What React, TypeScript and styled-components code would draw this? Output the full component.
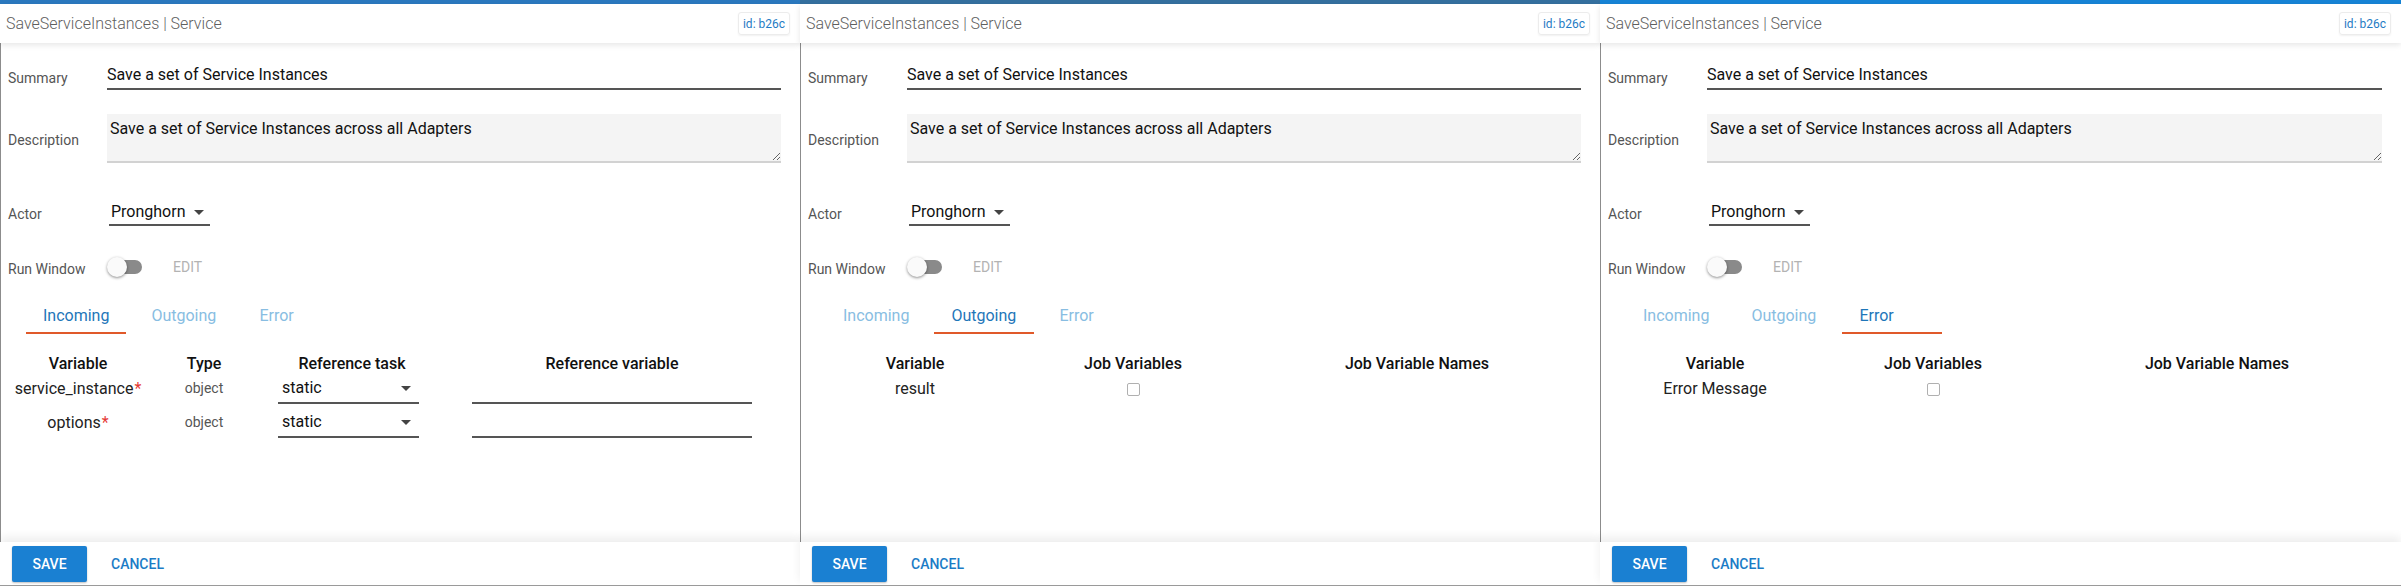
import React from "react";
import styled, { createGlobalStyle } from "styled-components";

type TabName = "Incoming" | "Outgoing" | "Error";

const GlobalStyle = createGlobalStyle`
  html, body {
    margin: 0;
    padding: 0;
    background: #ffffff;
    font-family: Roboto, "Open Sans", Arial, sans-serif;
    color: #222;
  }
  * {
    box-sizing: border-box;
  }
`;

function IncomingTable() {
  return (
    <Table $columns="140px 112px 184px 336px">
      <HeadCell>Variable</HeadCell>
      <HeadCell>Type</HeadCell>
      <HeadCell>Reference task</HeadCell>
      <HeadCell>Reference variable</HeadCell>

      <Cell>
        service_instance<Required>*</Required>
      </Cell>
      <TypeCell>object</TypeCell>
      <Cell>
        <SelectBox $width={141}>
          static
          <Arrow />
        </SelectBox>
      </Cell>
      <Cell>
        <LineInput />
      </Cell>

      <Cell>
        options<Required>*</Required>
      </Cell>
      <TypeCell>object</TypeCell>
      <Cell>
        <SelectBox $width={141}>
          static
          <Arrow />
        </SelectBox>
      </Cell>
      <Cell>
        <LineInput />
      </Cell>
    </Table>
  );
}

function JobTable({ variable }: { variable: string }) {
  return (
    <Table $columns="214px 222px 346px">
      <HeadCell>Variable</HeadCell>
      <HeadCell>Job Variables</HeadCell>
      <HeadCell>Job Variable Names</HeadCell>

      <Cell>{variable}</Cell>
      <Cell>
        <CheckBox />
      </Cell>
      <Cell />
    </Table>
  );
}

function TaskPanel({
  tab,
  width,
  barColor,
}: {
  tab: TabName;
  width: number;
  barColor: string;
}) {
  const tabs: TabName[] = ["Incoming", "Outgoing", "Error"];

  return (
    <Panel $width={width}>
      <TopBar $color={barColor} />
      <Header>
        <Title>SaveServiceInstances | Service</Title>
        <IdBadge>id: b26c</IdBadge>
      </Header>
      <Body>
        <FieldRow $top={19}>
          <FieldLabel>Summary</FieldLabel>
          <TextInput defaultValue="Save a set of Service Instances" />
        </FieldRow>
        <FieldRow $top={24}>
          <FieldLabel>Description</FieldLabel>
          <TextArea defaultValue="Save a set of Service Instances across all Adapters" />
        </FieldRow>
        <FieldRow $top={35}>
          <FieldLabel>Actor</FieldLabel>
          <ActorSelect>
            Pronghorn
            <Arrow />
          </ActorSelect>
        </FieldRow>
        <FieldRow $top={27}>
          <FieldLabel>Run Window</FieldLabel>
          <Toggle>
            <Track />
            <Thumb />
          </Toggle>
          <EditLink>EDIT</EditLink>
        </FieldRow>

        <TabBar>
          {tabs.map((t) => (
            <Tab key={t} $active={t === tab}>
              {t}
            </Tab>
          ))}
        </TabBar>

        {tab === "Incoming" && <IncomingTable />}
        {tab === "Outgoing" && <JobTable variable="result" />}
        {tab === "Error" && <JobTable variable="Error Message" />}
      </Body>
      <Footer>
        <SaveButton>SAVE</SaveButton>
        <CancelButton>CANCEL</CancelButton>
      </Footer>
    </Panel>
  );
}

export default function App() {
  return (
    <>
      <GlobalStyle />
      <Page>
        <TaskPanel tab="Incoming" width={800} barColor="#2b79bf" />
        <TaskPanel tab="Outgoing" width={800} barColor="#35709f" />
        <TaskPanel tab="Error" width={801} barColor="#1784d6" />
      </Page>
    </>
  );
}

const Page = styled.div`
  display: flex;
  flex-direction: row;
  width: 2401px;
  height: 586px;
  overflow: hidden;
`;

const Panel = styled.div<{ $width: number }>`
  width: ${(p) => p.$width}px;
  flex: none;
  height: 586px;
  display: flex;
  flex-direction: column;
  background: #fff;
`;

const TopBar = styled.div<{ $color: string }>`
  height: 4px;
  background: ${(p) => p.$color};
`;

const Header = styled.div`
  height: 39px;
  display: flex;
  align-items: center;
  justify-content: space-between;
  padding: 0 10px 0 6px;
  background: #fff;
  box-shadow: 0 2px 6px rgba(0, 0, 0, 0.1);
  position: relative;
  z-index: 2;
`;

const Title = styled.div`
  font-size: 16px;
  font-weight: 300;
  color: #5f5f5f;
`;

const IdBadge = styled.div`
  height: 23px;
  width: 52px;
  display: flex;
  align-items: center;
  justify-content: center;
  font-size: 12px;
  color: #1f7cc4;
  border: 1px solid #ececec;
  border-radius: 3px;
  box-shadow: 0 1px 2px rgba(0, 0, 0, 0.06);
`;

const Body = styled.div`
  flex: 1;
  display: flex;
  flex-direction: column;
  border-left: 1px solid #8c8c8c;
  padding: 0 19px 0 7px;
`;

const FieldRow = styled.div<{ $top: number }>`
  display: flex;
  align-items: center;
  margin-top: ${(p) => p.$top}px;
  min-height: 28px;
`;

const FieldLabel = styled.div`
  width: 99px;
  flex: none;
  font-size: 14px;
  color: #555;
  padding-top: 3px;
`;

const TextInput = styled.input`
  flex: 1;
  height: 28px;
  border: none;
  border-bottom: 2px solid #555;
  padding: 0 0 2px 0;
  font-family: Roboto, Arial, sans-serif;
  font-size: 16px;
  color: #111;
  outline: none;
  background: transparent;
`;

const TextArea = styled.textarea`
  flex: 1;
  height: 49px;
  border: none;
  border-bottom: 2px solid #d2d2d2;
  background: #f4f4f4;
  padding: 5px 3px 0 3px;
  font-family: Roboto, Arial, sans-serif;
  font-size: 16px;
  line-height: 19px;
  color: #111;
  outline: none;
  resize: vertical;
`;

const SelectBox = styled.div<{ $width: number }>`
  width: ${(p) => p.$width}px;
  height: 32px;
  margin: 0 auto 0 18px;
  display: flex;
  align-items: center;
  justify-content: space-between;
  padding: 0 8px 0 4px;
  border-bottom: 2px solid #555;
  font-size: 16px;
  color: #111;
`;

const ActorSelect = styled.div`
  width: 101px;
  height: 28px;
  margin-left: 2px;
  display: flex;
  align-items: center;
  gap: 8px;
  padding: 0 0 0 2px;
  border-bottom: 2px solid #555;
  font-size: 16px;
  color: #111;
`;

const Arrow = styled.span`
  width: 0;
  height: 0;
  border-left: 5px solid transparent;
  border-right: 5px solid transparent;
  border-top: 5px solid #444;
  margin-top: 2px;
`;

const Toggle = styled.div`
  position: relative;
  width: 35px;
  height: 20px;
  display: flex;
  align-items: center;
`;

const Track = styled.div`
  width: 34px;
  height: 14px;
  margin-left: 1px;
  border-radius: 7px;
  background: #8a8a8a;
`;

const Thumb = styled.div`
  position: absolute;
  left: 0;
  top: 0;
  width: 20px;
  height: 20px;
  border-radius: 50%;
  background: #fafafa;
  box-shadow: 0 1px 3px rgba(0, 0, 0, 0.45);
`;

const EditLink = styled.div`
  margin-left: 31px;
  font-size: 14px;
  color: #b3b3b3;
`;

const TabBar = styled.div`
  display: flex;
  gap: 8px;
  margin: 17px 0 0 18px;
`;

const Tab = styled.div<{ $active: boolean }>`
  min-width: 100px;
  height: 36px;
  padding: 0 17px;
  display: flex;
  align-items: center;
  font-size: 16px;
  color: ${(p) => (p.$active ? "#1e76b9" : "#88bde2")};
  border-bottom: 2px solid ${(p) => (p.$active ? "#e0592a" : "transparent")};
`;

const Table = styled.div<{ $columns: string }>`
  display: grid;
  grid-template-columns: ${(p) => p.$columns};
  grid-auto-rows: 34px;
  grid-template-rows: 16px;
  margin-top: 21px;
`;

const HeadCell = styled.div`
  display: flex;
  align-items: center;
  justify-content: center;
  font-size: 16px;
  font-weight: 500;
  color: #111;
  white-space: nowrap;
`;

const Cell = styled.div`
  display: flex;
  align-items: center;
  justify-content: center;
  font-size: 16px;
  color: #222;
  white-space: nowrap;
`;

const TypeCell = styled(Cell)`
  font-size: 14px;
  color: #555;
`;

const Required = styled.span`
  color: #e53935;
  margin-left: 1px;
`;

const LineInput = styled.div`
  width: 280px;
  height: 32px;
  border-bottom: 2px solid #555;
`;

const CheckBox = styled.div`
  width: 13px;
  height: 13px;
  border: 1px solid #b0b0b0;
  border-radius: 2px;
  margin-top: 2px;
`;

const Footer = styled.div`
  height: 44px;
  display: flex;
  align-items: flex-start;
  padding: 4px 12px 0 12px;
  background: #fff;
  border-bottom: 1px solid #9a9a9a;
  box-shadow: 0 -5px 9px rgba(0, 0, 0, 0.07);
  position: relative;
  z-index: 2;
`;

const SaveButton = styled.div`
  width: 75px;
  height: 36px;
  display: flex;
  align-items: center;
  justify-content: center;
  background: #1a80d2;
  color: #fff;
  font-size: 14px;
  font-weight: 500;
  border-radius: 2px;
  box-shadow: 0 1px 2px rgba(0, 0, 0, 0.25);
`;

const CancelButton = styled.div`
  height: 36px;
  margin-left: 24px;
  display: flex;
  align-items: center;
  color: #1c7cc6;
  font-size: 14px;
  font-weight: 500;
`;
